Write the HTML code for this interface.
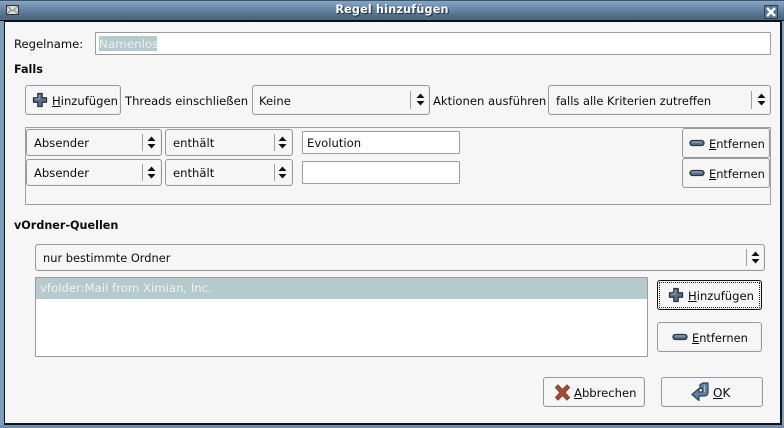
<!DOCTYPE html>
<html><head><meta charset="utf-8"><style>
html,body{margin:0;padding:0;width:784px;height:428px;overflow:hidden;background:#7d9dbf}
body{font-family:"DejaVu Sans","Liberation Sans",sans-serif;font-size:11.6px;color:#0c0c0c;position:relative}
.a{position:absolute;white-space:nowrap;box-sizing:border-box}
.t{position:absolute;white-space:nowrap;line-height:16px;height:16px}
.b{font-weight:bold;font-size:11.2px}
.btn,.cb{position:absolute;box-sizing:border-box;border:1px solid #999;border-radius:3px;background:#f7f6f6;box-shadow:inset -1px -1px 0 #efecec}
.in{position:absolute;box-sizing:border-box;border:1px solid #9c9c9c;background:#fff;border-radius:1px}
.sep{position:absolute;width:1px;background:#a0a0a0}
u{text-decoration:underline;text-underline-offset:1px}
svg{position:absolute;overflow:visible}
</style></head><body>
<svg width="0" height="0" style="position:absolute"><defs>
<symbol id="ar" viewBox="0 0 9 13"><path d="M4.500 0.500L8.500 5H0.500Z M4.500 12.500L0.500 8H8.500Z" fill="#111"/></symbol>
<symbol id="pl" viewBox="0 0 16 16"><path d="M5.800 1.500h4.400v4.300h4.300v4.400h-4.300v4.300H5.800v-4.300H1.500V5.800h4.300z" fill="#56708c" stroke="#2c3541" stroke-width="1.300" stroke-linejoin="round"/><path d="M7 3v4H3" fill="none" stroke="#9fb5ca" stroke-width="1"/></symbol>
<symbol id="mi" viewBox="0 0 16 8"><rect x="1" y="1.500" width="14" height="5" rx="2.500" fill="#56708c" stroke="#2c3541" stroke-width="1.300"/><path d="M3 3h10" stroke="#9fb5ca"/></symbol>
</defs></svg>

<!-- title bar -->
<div class="a" style="left:0;top:0;width:784px;height:21px;background:linear-gradient(#86a6c6,#7393b4 25%,#4d6882 85%);border-top:1px solid #3f5367;border-bottom:1px solid #0b0f14"></div>
<div class="t b" style="left:0;top:2px;width:784px;text-align:center;color:#fff;letter-spacing:.2px;text-shadow:1px 1px 1px #1c2a38">Regel hinzufügen</div>
<svg style="left:6px;top:4px" width="13" height="12"><rect x=".5" y="1.500" width="12" height="9" fill="#d8d8d4" stroke="#333"/><path d="M1 2l5.500 5L12 2M1 10l4-4M12 10L8 6" stroke="#888" fill="none"/></svg>
<svg style="left:764px;top:5px" width="15" height="15"><rect x=".5" y=".5" width="13" height="13" fill="#5b7895" stroke="#2e4052"/><path d="M3 3l8 8M11 3l-8 8" stroke="#fff" stroke-width="2.400"/></svg>

<!-- content -->
<div class="a" style="left:4px;top:21px;width:778px;height:404px;background:#f6f6f6;border:1px solid #101418;border-width:1px 2px 2px 1px;border-color:#101418"></div>
<div class="a" style="left:0;top:425px;width:784px;height:3px;background:#6f8fb0"></div>

<div class="t" style="left:14px;top:36px">Regelname:</div>
<div class="in" style="left:95px;top:32px;width:676px;height:23px"></div>
<div class="a" style="left:99px;top:36px;height:15px;width:58px;background:#b5cacc"></div>
<div class="t" style="left:99px;top:36px;color:#e9efef;font-size:11.9px">Namenlos</div>

<div class="t b" style="left:14px;top:60px;margin-top:1px;transform:translateY(1px)">Falls</div>

<div class="btn" style="left:25px;top:85px;width:96px;height:30px"></div>
<svg style="left:32px;top:92px" width="16" height="16"><use href="#pl"/></svg>
<div class="t" style="left:52px;top:93px"><u>H</u>inzufügen</div>
<div class="t" style="left:125px;top:93px">Threads einschließen</div>

<div class="cb" style="left:252px;top:85px;width:178px;height:30px"></div>
<div class="t" style="left:259px;top:93px">Keine</div>
<div class="sep" style="left:410px;top:91px;height:18px"></div>
<svg style="left:416px;top:93px" width="9" height="13"><use href="#ar"/></svg>

<div class="t" style="left:433px;top:93px">Aktionen ausführen</div>
<div class="cb" style="left:548px;top:85px;width:223px;height:30px"></div>
<div class="t" style="left:556px;top:93px;font-size:11.45px">falls alle Kriterien zutreffen</div>
<div class="sep" style="left:751px;top:91px;height:18px"></div>
<svg style="left:757px;top:93px" width="9" height="13"><use href="#ar"/></svg>

<!-- criteria frame -->
<div class="a" style="left:25px;top:127px;width:746px;height:78px;border:1px solid #a0a0a0"></div>

<div class="cb" style="left:26px;top:129px;width:136px;height:27px"></div>
<div class="t" style="left:34px;top:135px">Absender</div>
<div class="sep" style="left:142px;top:134px;height:17px"></div>
<svg style="left:147px;top:136px" width="9" height="13"><use href="#ar"/></svg>
<div class="cb" style="left:165px;top:129px;width:128px;height:27px"></div>
<div class="t" style="left:173px;top:135px">enthält</div>
<div class="sep" style="left:274px;top:134px;height:17px"></div>
<svg style="left:278px;top:136px" width="9" height="13"><use href="#ar"/></svg>
<div class="in" style="left:302px;top:131px;width:158px;height:23px"></div>
<div class="t" style="left:307px;top:135px">Evolution</div>

<div class="cb" style="left:26px;top:159px;width:136px;height:27px"></div>
<div class="t" style="left:34px;top:165px">Absender</div>
<div class="sep" style="left:142px;top:164px;height:17px"></div>
<svg style="left:147px;top:166px" width="9" height="13"><use href="#ar"/></svg>
<div class="cb" style="left:165px;top:159px;width:128px;height:27px"></div>
<div class="t" style="left:173px;top:165px">enthält</div>
<div class="sep" style="left:274px;top:164px;height:17px"></div>
<svg style="left:278px;top:166px" width="9" height="13"><use href="#ar"/></svg>
<div class="in" style="left:302px;top:161px;width:158px;height:23px"></div>

<div class="btn" style="left:682px;top:128px;width:88px;height:30px"></div>
<svg style="left:689px;top:139px" width="16" height="8"><use href="#mi"/></svg>
<div class="t" style="left:709px;top:136px;font-size:11.4px"><u>E</u>ntfernen</div>
<div class="btn" style="left:682px;top:158px;width:88px;height:30px"></div>
<svg style="left:689px;top:169px" width="16" height="8"><use href="#mi"/></svg>
<div class="t" style="left:709px;top:166px;font-size:11.4px"><u>E</u>ntfernen</div>

<div class="t b" style="left:14px;top:218px">vOrdner-Quellen</div>

<div class="cb" style="left:35px;top:244px;width:730px;height:27px"></div>
<div class="t" style="left:43px;top:250px;font-size:11.4px">nur bestimmte Ordner</div>
<div class="sep" style="left:746px;top:249px;height:17px"></div>
<svg style="left:751px;top:251px" width="9" height="13"><use href="#ar"/></svg>

<div class="in" style="left:35px;top:277px;width:613px;height:80px"></div>
<div class="a" style="left:36px;top:278px;width:611px;height:21px;background:#b5cacc"></div>
<div class="t" style="left:40px;top:280px;color:#eef3f3;font-size:11.7px">vfolder:Mail from Ximian, Inc.</div>

<div class="btn" style="left:657px;top:280px;width:105px;height:30px;border-color:#111"></div>
<div class="a" style="left:659px;top:282px;width:101px;height:26px;border:1px dotted #222"></div>
<svg style="left:668px;top:287px" width="16" height="16"><use href="#pl"/></svg>
<div class="t" style="left:688px;top:288px"><u>H</u>inzufügen</div>

<div class="btn" style="left:657px;top:322px;width:105px;height:30px"></div>
<svg style="left:672px;top:333px" width="16" height="8"><use href="#mi"/></svg>
<div class="t" style="left:692px;top:330px;font-size:11.4px"><u>E</u>ntfernen</div>

<div class="btn" style="left:543px;top:377px;width:102px;height:30px"></div>
<svg style="left:554px;top:384px" width="17" height="17"><path d="M1.500 3.500L4 1 8.500 5.500 13 1 15.500 3.500 11 8.500 15.500 13.500 13 16 8.500 11.500 4 16 1.500 13.500 6 8.500Z" fill="#b4472a" stroke="#6b4a3e" stroke-width="1"/></svg>
<div class="t" style="left:574px;top:385px"><u>A</u>bbrechen</div>

<div class="btn" style="left:661px;top:377px;width:102px;height:30px"></div>
<svg style="left:691px;top:382px" width="18" height="20"><path d="M9 2.500l3-1.500h5v9q0 4-4 4H8v4.500L1 12.500 8 6.500v3.500h3.500V6.500H9Z" fill="#5f83a8" stroke="#2f3f52" stroke-width="1.200" stroke-linejoin="round"/><path d="M13.500 3v7" stroke="#a9c1d8"/></svg>
<div class="t" style="left:713px;top:385px;font-size:12px"><u>O</u>K</div>
</body></html>
